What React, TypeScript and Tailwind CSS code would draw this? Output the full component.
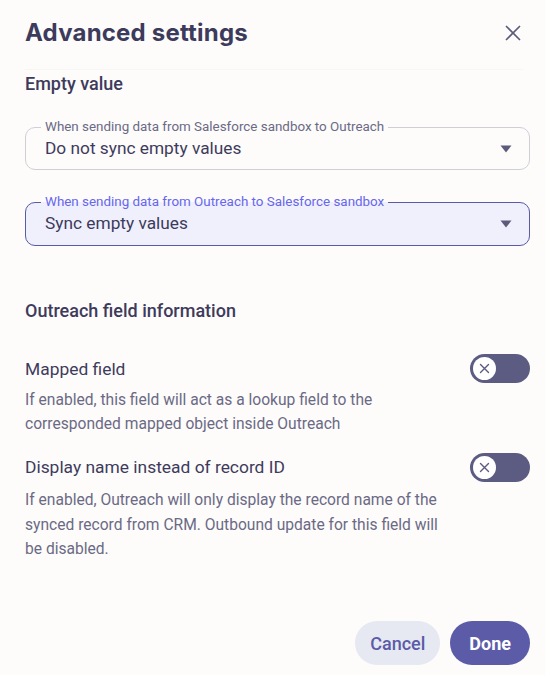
import React from "react";

const body = { fontFamily: "Roboto, 'Noto Sans', sans-serif" };

function Caret() {
  return (
    <svg width="12" height="8" viewBox="0 0 12 8" className="shrink-0">
      <path d="M0.5 0.5 L11.5 0.5 L6 7.5 Z" fill="#5c5b7c" />
    </svg>
  );
}

function Toggle() {
  return (
    <div className="w-[60px] h-[29px] rounded-full bg-[#5c5c82] flex items-center pl-[3px] shrink-0">
      <div className="w-[23px] h-[23px] rounded-full bg-white flex items-center justify-center">
        <svg width="11" height="11" viewBox="0 0 11 11">
          <path d="M1.5 1.5 L9.5 9.5 M9.5 1.5 L1.5 9.5" stroke="#5c5c82" strokeWidth="1.4" strokeLinecap="round" />
        </svg>
      </div>
    </div>
  );
}

export default function App() {
  return (
    <div className="w-[545px] h-[675px] bg-[#fdfcfb] text-[#3d3b5c] flex flex-col" style={body}>
      <div className="flex items-center justify-between ml-[25px] mr-[22px] h-[70px] pb-[4px] border-b border-[#f8f6f5]">
        <h1 className="text-[24px] font-bold leading-[32px] tracking-[0.2px]" style={{ fontFamily: "Inter, Roboto, sans-serif" }}>
          Advanced settings
        </h1>
        <svg width="20" height="20" viewBox="0 0 20 20">
          <path d="M3.5 3.5 L16.5 16.5 M16.5 3.5 L3.5 16.5" stroke="#5c5b7c" strokeWidth="1.7" strokeLinecap="round" />
        </svg>
      </div>
      <div className="pl-[25px] pr-[15px] flex flex-col">
        <h2 className="text-[18px] font-medium leading-[24px] mt-[2px]">Empty value</h2>

        <fieldset className="mt-[24px] border border-[#cfcfd8] rounded-[10px] bg-transparent">
          <legend className="ml-[15px] px-[4px] text-[13.4px] leading-[14px] text-[#6b6a85]">
            When sending data from Salesforce sandbox to Outreach
          </legend>
          <div className="flex items-center justify-between pl-[19px] pr-[17px] h-[29px] mb-[6px]">
            <span className="text-[17.3px] text-[#3d3b5c]">Do not sync empty values</span>
            <Caret />
          </div>
        </fieldset>

        <fieldset className="mt-[25px] border border-[#5a5aa8] rounded-[10px] bg-[#f0f0fc]">
          <legend className="ml-[15px] px-[4px] text-[13.4px] leading-[14px] text-[#6666ee]">
            When sending data from Outreach to Salesforce sandbox
          </legend>
          <div className="flex items-center justify-between pl-[19px] pr-[17px] h-[29px] mb-[7px]">
            <span className="text-[17.3px] text-[#3d3b5c]">Sync empty values</span>
            <Caret />
          </div>
        </fieldset>

        <h2 className="text-[18px] font-medium leading-[24px] mt-[53px]">Outreach field information</h2>

        <div className="mt-[31px] flex justify-between items-start gap-4">
          <div className="flex flex-col">
            <div className="text-[17.4px] leading-[24px] mt-[3px]">Mapped field</div>
            <p className="text-[15.6px] leading-[24px] text-[#6b6a85] mt-[7px] max-w-[380px]">
              If enabled, this field will act as a lookup field to the corresponded mapped object inside Outreach
            </p>
          </div>
          <Toggle />
        </div>

        <div className="mt-[17px] flex justify-between items-start gap-4">
          <div className="flex flex-col">
            <div className="text-[17.4px] leading-[24px] mt-[2px]">Display name instead of record ID</div>
            <p className="text-[15.6px] leading-[24.5px] text-[#6b6a85] mt-[9px] max-w-[440px]">
              If enabled, Outreach will only display the record name of the synced record from CRM. Outbound update for this field will be disabled.
            </p>
          </div>
          <Toggle />
        </div>
      </div>
      <div className="flex-1" />
      <div className="flex justify-end gap-[10px] px-[15px] pb-[10px]">
        <button className="h-[44px] px-[15px] rounded-full bg-[#e6e8f2] text-[#5b5ba8] text-[18px] font-medium">Cancel</button>
        <button className="h-[44px] px-[19px] rounded-full bg-[#5b5ba8] text-white text-[18px] font-bold">Done</button>
      </div>
    </div>
  );
}
